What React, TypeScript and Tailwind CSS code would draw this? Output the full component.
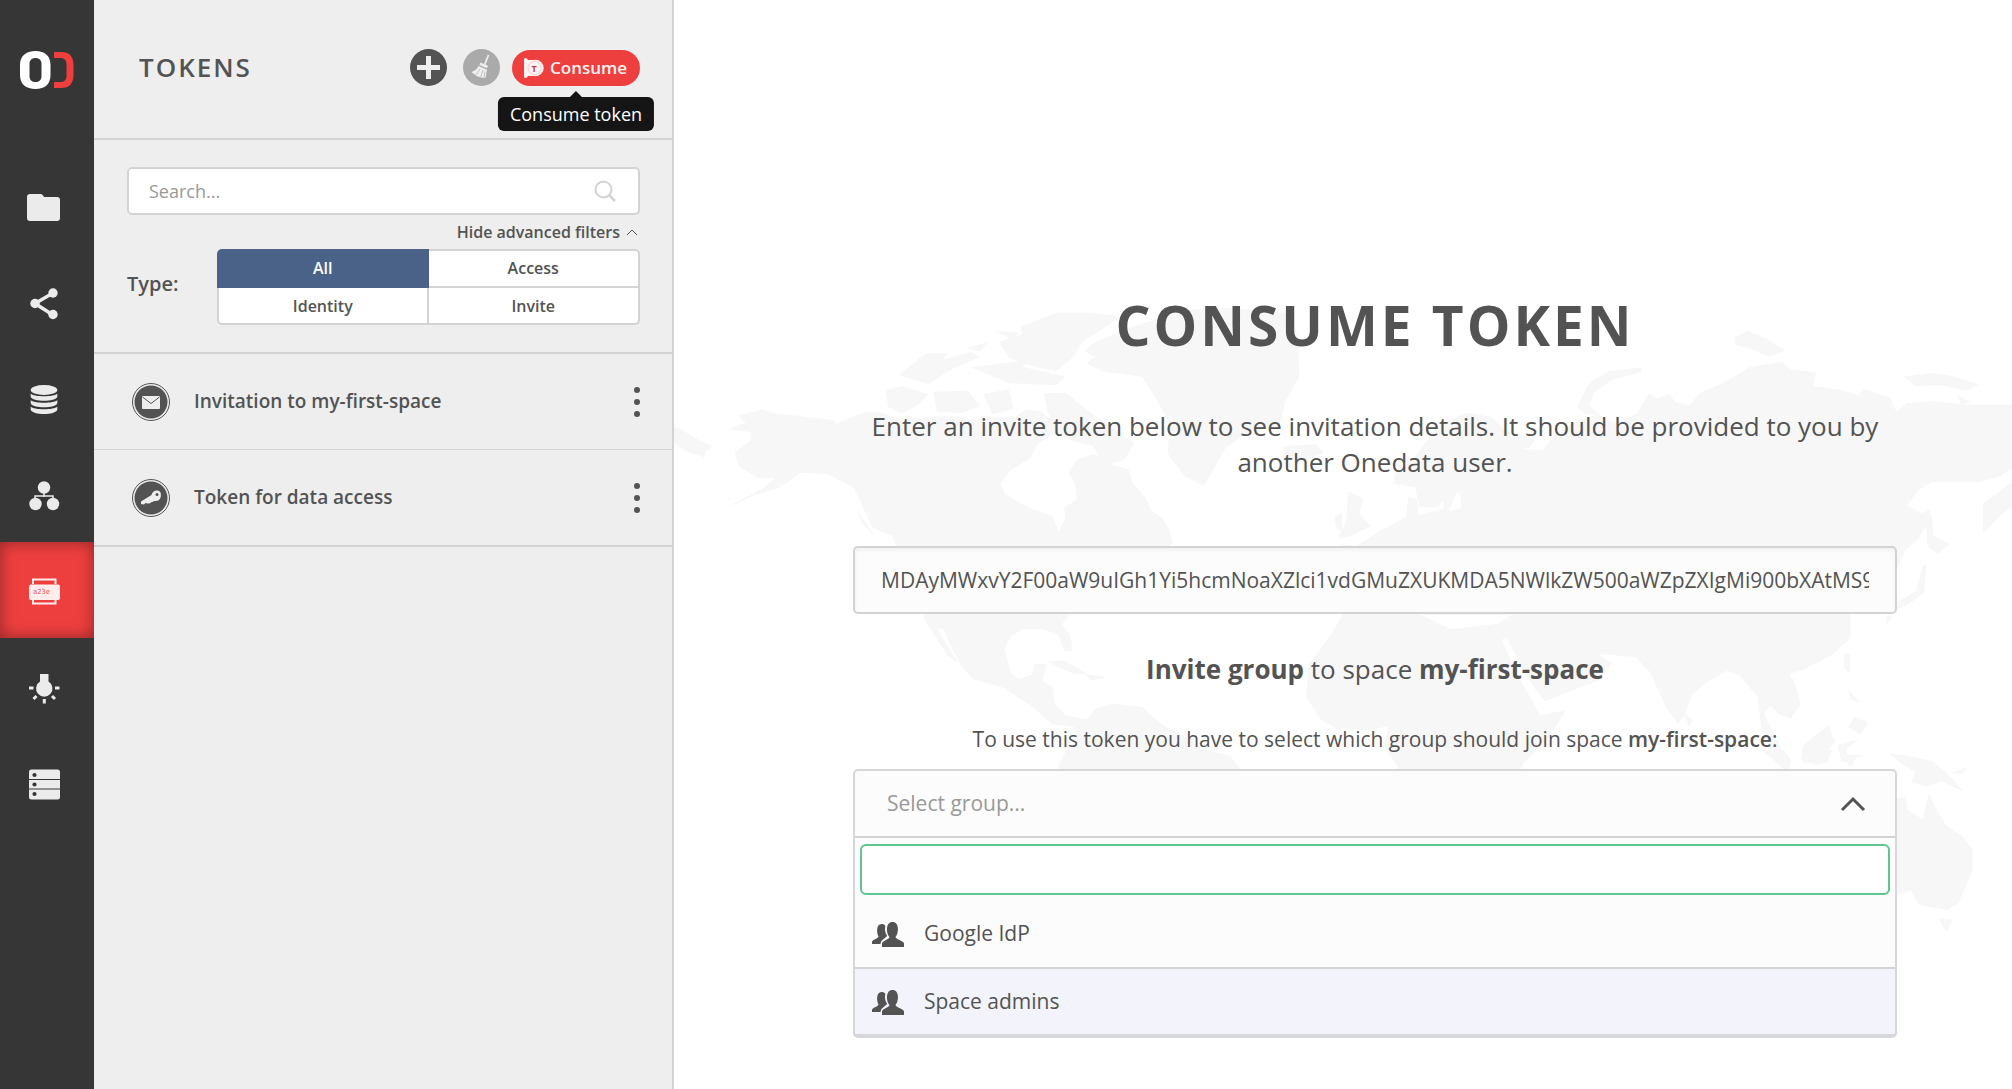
import React from 'react';

interface NavItem {
  label: string;
  icon: React.ReactNode;
  active?: boolean;
}

interface TokenItem {
  name: string;
  icon: React.ReactNode;
}

const navItems: NavItem[] = [
  {
    label: 'Data',
    icon: (
      <path d="M8 6h10.500q1.500 0 2.300 1.200l1.400 1.900H35q3 0 3 3V30q0 3-3 3H8q-3 0-3-3V9q0-3 3-3z" />
    ),
  },
  {
    label: 'Shares',
    icon: (
      <>
        <path d="M31 9 13 19.500 31 31" fill="none" stroke="currentColor" strokeWidth="3.500" />
        <circle cx="31" cy="9" r="4.700" />
        <circle cx="13" cy="19.500" r="4.700" />
        <circle cx="31" cy="30.500" r="4.700" />
      </>
    ),
  },
  {
    label: 'Spaces',
    icon: (
      <>
        <ellipse cx="22" cy="10" rx="13.300" ry="5" />
        <path d="M8.700 13.500c3 3.700 23.600 3.700 26.600 0v3.300c-1.500 5.300-25.100 5.300-26.600 0z" />
        <path d="M8.700 20c3 3.700 23.600 3.700 26.600 0v3.300c-1.500 5.300-25.100 5.300-26.600 0z" />
        <path d="M8.700 26.500c3 3.700 23.600 3.700 26.600 0v3.300c-1.500 5.700-25.100 5.700-26.600 0z" />
      </>
    ),
  },
  {
    label: 'Groups',
    icon: (
      <>
        <path d="M22 14v7M13 26v-6h18v6" fill="none" stroke="currentColor" strokeWidth="1.500" />
        <circle cx="22" cy="11.500" r="6.200" />
        <circle cx="13.500" cy="28" r="6.200" />
        <circle cx="31" cy="28" r="6.200" />
      </>
    ),
  },
  {
    label: 'Tokens',
    active: true,
    icon: (
      <>
        <path d="M11 12V7.500h22.500V12M11 27v4.500h22.500V27" fill="none" stroke="currentColor" strokeWidth="2" />
        <rect x="7" y="12.500" width="31" height="15.500" rx="2" />
        <text x="11" y="22" fontSize="7" fontFamily="DejaVu Sans Mono, monospace" fill="#ee5555">a23e</text>
      </>
    ),
  },
  {
    label: 'Providers',
    icon: (
      <>
        <path d="M18 6h8.500v7.500a8.200 8.200 0 1 1-8.500 0z" />
        <path
          d="M7 20h4.500M33 20h4.500M11.500 31l3-3M33 31l-3-3M22.300 31v4.500"
          fill="none"
          stroke="currentColor"
          strokeWidth="3"
        />
      </>
    ),
  },
  {
    label: 'Clusters',
    icon: (
      <>
        <path d="M9.500 5.500h26q2.500 0 2.500 2.500v7H7V8q0-2.500 2.500-2.500zM7 16h31v8.500H7zM7 25.500h31v7.500q0 2.500-2.500 2.500h-26Q7 35.500 7 33z" />
        <g fill="#363636">
          <circle cx="12.500" cy="11" r="2.100" />
          <circle cx="12.500" cy="20.500" r="2.100" />
          <circle cx="12.500" cy="30" r="2.100" />
        </g>
      </>
    ),
  },
];

const tokens: TokenItem[] = [
  {
    name: 'Invitation to my-first-space',
    icon: (
      <>
        <rect x="10" y="13" width="18" height="13" rx="1" fill="#eeeeee" />
        <path d="m10.500 14 8.500 6.500 8.500-6.500" fill="none" stroke="#535353" />
      </>
    ),
  },
  {
    name: 'Token for data access',
    icon: (
      <>
        <path
          d="M9 22.500 19.500 16c.5-2.800 3-4.800 6-4.500 3 .5 3.800 2.800 3.300 6-.5 3.500-3.300 5-6.300 4.500-1.500 0-2 1.700-3.500 1.200-.8 1.300-2 1.500-3.500 1.200L13.500 24 12 25.500 9 25z"
          fill="#eeeeee"
        />
        <circle cx="25" cy="15.500" r="1.500" fill="#535353" />
      </>
    ),
  },
];

const groups = ['Google IdP', 'Space admins'];

const tokenValue =
  'MDAyMWxvY2F00aW9uIGh1Yi5hcmNoaXZlci1vdGMuZXUKMDA5NWlkZW500aWZpZXIgMi900bXAtMS91c3IvbmlkLzg5';

function Logo() {
  return (
    <svg viewBox="0 0 56 40" className="w-14 h-10" role="img" aria-label="Onedata">
      <path
        fillRule="evenodd"
        fill="#ffffff"
        d="M15.500 1C25 1 30.500 6 30.500 15v10c0 9-5.500 14-15 14S0 34 0 25V15C0 6 6 1 15.500 1zm0 7C12 8 9.500 10 9.500 14v12c0 4 2.500 6 6 6s6-2 6-6V14c0-4-2.500-6-6-6z"
      />
      <path d="M34 2h7c8.500 0 12.500 4.500 12.500 13v10c0 8.500-4 13-12.500 13h-7v-6h6c4 0 6.500-2 6.500-6V14c0-4-2.500-6-6.500-6h-6z" fill="#ee3f3f" />
    </svg>
  );
}

function WorldMap() {
  return (
    <svg
      viewBox="0 0 1338 1089"
      preserveAspectRatio="xMidYMin slice"
      aria-hidden="true"
      className="absolute inset-0 w-full h-full pointer-events-none"
      fill="#f7f7f7"
    >
      {/* Americas, Greenland, west coast of Africa */}
      <g transform="translate(-2 280) scale(.4273 .3333)">
        <path d="M0 440 22 447 48 470 95 500 78 515 75 532 30 512 5 490z" />
        <path d="m155 400 30-2 25-10 30 12 35 5 60 8 45 8 5 12 30-20 40-18 30 0 20 10 40 15 45-8 60-5 60 12 30-8 60 2 30-25 30 5 20 20 40-10 20 15-15 35-40 15-30 25-15 40-50 40-20 40 10 30 55 40 55 25 15 45 15-40-2-30 30-25-5-50-15-30 20-40 40-15 40 30 40 15 10 40 30 45 15 40 25 20 15 35 10 40-240 210-20 35 20 35 5 45-20 0-15-50-35-15-45 0-30 20-15 40 15 70 20 20 30-15 5-30 30 0-12 48 25 20 5 50 25 35 50 12 20-32 40-15 70 10 25 30 30 30 60 40 30 30 60 15 35 60H900l5-30 20-50 25-20-10-45-50-8-45-50-70-60-70-25-25-35-20-45-25-70-15-5 25 55 25 50-25-20-30-60-25-50 0-45-75-205-45-25-30-80-15-40-60-40-65-5-30 30-30 20-40 15-80 45 95-65 25-28-40-2-45-35-8-42 38-35-2-25-50-8 40-20-20-22 55-12z" />
        <path d="m815 140 85-42h85l65 12-40 35-50 40-20 45-40 42-40-7-70-30-25-50 55-22z" />
        <path d="m985 190 75-42 90-38 50-20 100-6 150 16 15 80 3 110-33 75-12 70-73 20-55 50-50 112-45-27-40-70 5-90-35-80-30-60-90-15-40-25 20-18-25-20z" />
        <path d="m500 330 40-12 60 25-20 28-42 30-32-20zM612 335l80-3 30 45-42 22-60-4zM728 342l60-14 12 60-50 14zM870 340l50-2 80 80 82 70-22 50-50 22-25-62-65-20-40-78z" />
        <path d="m565 250 30-30 50 0-10 18 65-22 20 15-70 40-50 42-70-28zM690 205l50-20-20 30zM700 262l140-22-20 20 100 30-20 26-110-6zM760 155l50 0-10 25z" />
        <path d="m878 1145 40-4 55 42-32 0zM968 1182l50 10-40 10zM1035 775l80-10 30-15 10 45h-60zM1010 590l28-10 8 40-20 18z" />
        <path d="m1430 498 80-5 15 25-50 28-42-15zM1550 710l18-12v52l-13-4zM1568 1008l-28 60-50 85-6 95 34 72 50 35z" />
        <path d="m430 690 25 40 20 42-30-42z" />
      </g>

      {/* Europe, Africa, Asia */}
      <g transform="translate(668 280) scale(.4273 .3333)">
        <path d="m470 510 30-50 60-42 40-15 40 30 50-32 28-60 22 15 25-15 15 25 35 10 20-35 60-35 60-45 75-15 20 22 60 10-8 40 68 12 40 15 10-18 62 25 15 42 25-25 60-5 80 10H1570v190l-30 25-50 18-110 0-30 22-28 48 35 22 20-10-10 50-20 42-28 28-21 60v110h-108l0 95-42 50-68 45-32 12 12 32 14 60-24 42-28-12-20-26-14 26 24 60 34 90-34-40-30-58-10-105-42-65-30-12-40 28-40 42-18 62-16 26-26-46-40-110-34-44-78-8-38 12-50-70 22 6 30 34 62 45-35 52-125 62-40-72-50-120-10 8 45 125 45 100 60-14-40 82-60 78-14 50H145l-20-50-26-50 10-62-50 12-60-8V1005l185 0 72 42 110-16 30-26H0v-210l35 2 55-45 60-42 5-58 20 5 4 48 60-20-8-50 20-30 80 0-60 28-22 62 80-30V500z" />
        <path d="m125 580 52-60 45-80 68-42 60 12 30 40 72 30-12 22-62 20 60 30v200l-100 0-60-20 0-90-30-10-22 50-45 0-10-60-50-10z" />
        <path d="m550 380 28-70 45-36 78-12v13l-70 25-42 40-10 35 22 28-30 0z" />
        <path d="m918 172 32-20 50 28 36 32-36 18-40-22-38-12zM1315 290l62-12 50 10 65 24-32 20-60-16-58 2zM1440 345l30 20-20 10z" />
        <path d="m15 632 35 25-10 42 28 40-48 30-30 5 20-50z" />
        <path d="M1568 605l-68 66v90l40-52 28-30zM1366 710l14-8 6 90-16 0zM1385 768l38 24-30 30-22-22zM1368 850l-6 90-40 36-50 26 20-30 52-40 14-70zM1275 1005l15 5-18 25z" />
        <path d="m1176 1120 12 2 2 60-16-22zM1185 1230l30 40-24-10zM1200 1310l32 18-18 34-30-20zM1168 1260l-25 45 5-12z" />
        <path d="m1080 1395 58-60 16 50-40 70-40-15zM1160 1395l50-18-30 30 8 45-20-10zM985 1350l66 90-5 40-30-30zM800 1300l22 20-10 22z" />
      </g>

      {/* Oceania */}
      <g transform="translate(726 750) scale(.3903 .3333)">
        <path d="m1255 10 30 5 30 5 50 14 40 40 38 50-56-30-38 16-40-14 12-30-40-28zM1410 70l44-20-14 22z" />
        <path d="m1255 150 40-12 6 42 38 28 16-80 16 42 28 56 42 32 26 42 0 60-36 100-30 20-70-14-22-44-64 20z" />
        <path d="m1380 505 36 4-16 38zM1480 66l30 20M1520 108l24 6z" />
        <path d="m925 0 60 0 12 50-30-12zM1030 0h78l-14 40-60 0zM1130 14h70l-30 8-16 30z" />
      </g>
    </svg>
  );
}

function GroupIcon() {
  return (
    <svg viewBox="0 0 32 26" className="w-8 h-[26px] fill-[#535353]" aria-hidden="true">
      <path d="M0 23v-2c0-2.500 6-3 6.500-5.500C4.500 12 4 3 9.500 3c2 0 3 .6 3.800 2-.8 4 0 7.500 1.700 9.500.2 2-6 3.500-6.500 8.500z" />
      <path d="M10 26v-3.500c0-3 7-3.500 7.500-6.500-3.500-4-4-15 3-15s6.500 11 3 15c.5 3 8.500 3.500 8.500 6.500V26z" />
    </svg>
  );
}

function Sidebar() {
  return (
    <nav className="w-[94px] shrink-0 bg-[#363636] flex flex-col">
      <a href="#home" className="h-[158px] pt-[50px] pl-5">
        <Logo />
      </a>
      {navItems.map((item) => (
        <a
          key={item.label}
          href={`#${item.label.toLowerCase()}`}
          aria-label={item.label}
          className={`h-24 flex items-center justify-center pt-1 pr-1.5 ${
            item.active
              ? 'bg-[#ee3f3f] text-[#ffecec] shadow-[inset_0_0_16px_rgba(0,0,0,0.4)]'
              : 'text-[#ebebeb]'
          }`}
        >
          <svg viewBox="0 0 44 40" className="w-11 h-10 fill-current">
            {item.icon}
          </svg>
        </a>
      ))}
    </nav>
  );
}

function TokensPanel() {
  return (
    <aside className="w-[580px] shrink-0 bg-[#eeeeee] border-r-2 border-[#d3d3d3]">
      <header className="h-[140px] pt-[49px] pl-[45px] pr-8 border-b-2 border-[#d3d3d3] flex items-start">
        <h1 className="flex-1 text-[26px] leading-9 font-semibold tracking-[2px]">TOKENS</h1>
        <div className="flex items-center">
          <button aria-label="Create token" className="mr-4">
            <svg viewBox="0 0 37 37" className="w-[37px] h-[37px]">
              <circle cx="18.500" cy="18.500" r="18.500" fill="#535353" />
              <path d="M18.500 7v23M7 18.500h23" stroke="#eeeeee" strokeWidth="5" />
            </svg>
          </button>
          <button aria-label="Clean up obsolete tokens" className="mr-3">
            <svg viewBox="0 0 37 37" className="w-[37px] h-[37px]">
              <circle cx="18.500" cy="18.500" r="18.500" fill="#aaaaaa" />
              <path d="m25.500 6-4 10" stroke="#eeeeee" strokeWidth="1.800" />
              <path d="m17.500 13.500 7.500 3.300-1 2.400-7.500-3.300z" fill="#eeeeee" />
              <path d="m15.500 17 8.500 3.700-1.500 8.300-4-.3-5-1.700-5-4q5-1.500 7-6z" fill="#eeeeee" />
              <path d="m17 20-4 6m7-5-2.500 7.500M22 22.500l-1 7" stroke="#aaaaaa" strokeWidth=".7" />
            </svg>
          </button>
          <div className="relative">
            <button
              aria-describedby="consume-tip"
              className="w-32 h-9 pl-3 rounded-full bg-[#ee3f3f] text-[#fff2f2] text-[17px] font-semibold flex items-center gap-1.5"
            >
              <svg viewBox="0 0 20 20" className="w-5 h-5">
                <path d="M0 1.500q0-1.500 1.500-1.500T4 2h7v16H4q-1 2-2.500 2T0 18.500z" fill="#fff2f2" />
                <circle cx="11.500" cy="10" r="8.200" fill="#fff2f2" />
                <circle cx="10.500" cy="10" r="6.500" fill="none" stroke="#ee3f3f" strokeOpacity=".35" strokeWidth=".6" />
                <text x="7.500" y="13.500" fontSize="9" fontWeight="700" fill="#c93b3b">T</text>
              </svg>
              Consume
            </button>
            <div
              id="consume-tip"
              role="tooltip"
              className="absolute z-10 top-[47px] left-1/2 -translate-x-1/2 px-3 py-1 rounded-md bg-[#151515] text-white text-[18px] leading-[26px] whitespace-nowrap"
            >
              <span className="absolute -top-1.5 left-1/2 -translate-x-1/2 border-x-[7px] border-b-[7px] border-x-transparent border-b-[#151515]" />
              Consume token
            </div>
          </div>
        </div>
      </header>

      <section className="pt-[27px] pb-[27px] pl-[33px] pr-8 border-b-2 border-[#d3d3d3]">
        <div className="relative">
          <input
            type="text"
            aria-label="Search tokens"
            placeholder="Search..."
            className="block w-full h-12 px-5 rounded-[5px] border-2 border-[#d3d3d3] bg-white text-[18px] placeholder:text-[#999999] outline-none"
          />
          <svg viewBox="0 0 22 22" className="absolute right-6 top-[13px] w-[22px] h-[22px]" fill="none" stroke="#d3d3d3">
            <circle cx="9.500" cy="9.500" r="8" strokeWidth="2" />
            <path d="m15 15 6 6" strokeWidth="2.500" />
          </svg>
        </div>
        <div className="h-[34px] flex items-center justify-end pr-0.5">
          <button className="flex items-center gap-1.5 text-[16px] font-semibold">
            Hide advanced filters
            <svg viewBox="0 0 12 8" className="w-3 h-2" fill="none" stroke="#535353">
              <path d="m1 7 5-5 5 5" />
            </svg>
          </button>
        </div>
        <div className="flex items-start">
          <span id="type-label" className="w-[90px] pt-5 text-[20px] leading-[30px] font-semibold">Type:</span>
          <div role="group" aria-labelledby="type-label" className="flex-1 grid grid-cols-2 text-[16px] font-semibold">
            <button aria-pressed="true" className="h-[39px] pb-0.5 rounded-tl-[5px] bg-[#4a6188] text-white">
              All
            </button>
            <button className="h-[39px] pb-0.5 rounded-tr-[5px] border-y-2 border-r-2 border-[#d3d3d3] bg-white">
              Access
            </button>
            <button className="h-[37px] rounded-bl-[5px] border-x-2 border-b-2 border-[#d3d3d3] bg-white">
              Identity
            </button>
            <button className="h-[37px] rounded-br-[5px] border-r-2 border-b-2 border-[#d3d3d3] bg-white">
              Invite
            </button>
          </div>
        </div>
      </section>

      <ul className="border-b-2 border-[#d3d3d3] divide-y divide-[#d3d3d3]">
        {tokens.map((token) => (
          <li key={token.name} className="h-[95px] first:h-24 pl-[38px] pr-8 flex items-center">
            <svg viewBox="0 0 38 38" className="w-[38px] h-[38px] mr-6" aria-hidden="true">
              <circle cx="19" cy="19" r="18.500" fill="none" stroke="#535353" />
              <circle cx="19" cy="19" r="16.500" fill="#535353" />
              {token.icon}
            </svg>
            <span className="flex-1 text-[19px] font-semibold">{token.name}</span>
            <button aria-label={`Actions for ${token.name}`}>
              <svg viewBox="0 0 6 32" className="w-1.5 h-8 fill-[#535353]">
                <circle cx="3" cy="4" r="3" />
                <circle cx="3" cy="16" r="3" />
                <circle cx="3" cy="28" r="3" />
              </svg>
            </button>
          </li>
        ))}
      </ul>
    </aside>
  );
}

function GroupSelect() {
  return (
    <div className="mt-3.5 rounded-[5px] border-2 border-b-4 border-[#d5d7d8] bg-[#fcfcfc] text-left text-[21px]">
      <button
        aria-haspopup="listbox"
        aria-expanded="true"
        className="w-full h-[67px] pl-8 pr-7 border-b-2 border-[#d3d3d3] flex items-center justify-between text-[#999999]"
      >
        Select group...
        <svg viewBox="0 0 28 18" className="w-7 h-[18px]" fill="none" stroke="#535353" strokeWidth="3">
          <path d="M3 15 14 4l11 11" />
        </svg>
      </button>
      <div className="px-[5px] py-1.5">
        <input
          type="text"
          aria-label="Filter groups"
          className="block w-full h-[51px] px-4 rounded-md border-2 border-[#5ec68f] bg-white outline-none"
        />
      </div>
      <ul role="listbox" aria-label="Groups">
        {groups.map((group, index) => (
          <li
            key={group}
            role="option"
            aria-selected={index === 1}
            className={`flex items-center gap-5 pl-[17px] ${
              index === 1 ? 'h-[67px] border-t-2 border-[#d3d3d3] bg-[#f2f3fb]' : 'h-[66px]'
            }`}
          >
            <GroupIcon />
            {group}
          </li>
        ))}
      </ul>
    </div>
  );
}

export default function App() {
  return (
    <div className="min-h-screen flex bg-white text-[#535353] font-['Open_Sans',sans-serif]">
      <Sidebar />
      <TokensPanel />
      <main className="relative flex-1 min-w-0 overflow-hidden">
        <WorldMap />
        <div className="relative pt-[295px] pl-[179px] pr-[115px] text-center">
          <h2 className="text-[55px] leading-[60px] font-bold tracking-[3px]">CONSUME TOKEN</h2>
          <p className="mt-[53px] text-[26px] leading-9">
            Enter an invite token below to see invitation details. It should be provided to you by another Onedata
            user.
          </p>
          <input
            type="text"
            aria-label="Invite token"
            defaultValue={tokenValue}
            className="block mt-[66px] w-full h-[68px] px-[26px] rounded-[5px] border-2 border-[#d3d3d3] bg-[#fcfcfc] text-[21px] shadow-[inset_0_2px_4px_rgba(0,0,0,0.05)] outline-none"
          />
          <p className="mt-[37px] text-[26px] leading-9">
            <strong>Invite group</strong> to space <strong>my-first-space</strong>
          </p>
          <p className="mt-9 text-[21px] leading-8">
            To use this token you have to select which group should join space{' '}
            <strong className="font-semibold">my-first-space</strong>:
          </p>
          <GroupSelect />
        </div>
      </main>
    </div>
  );
}
